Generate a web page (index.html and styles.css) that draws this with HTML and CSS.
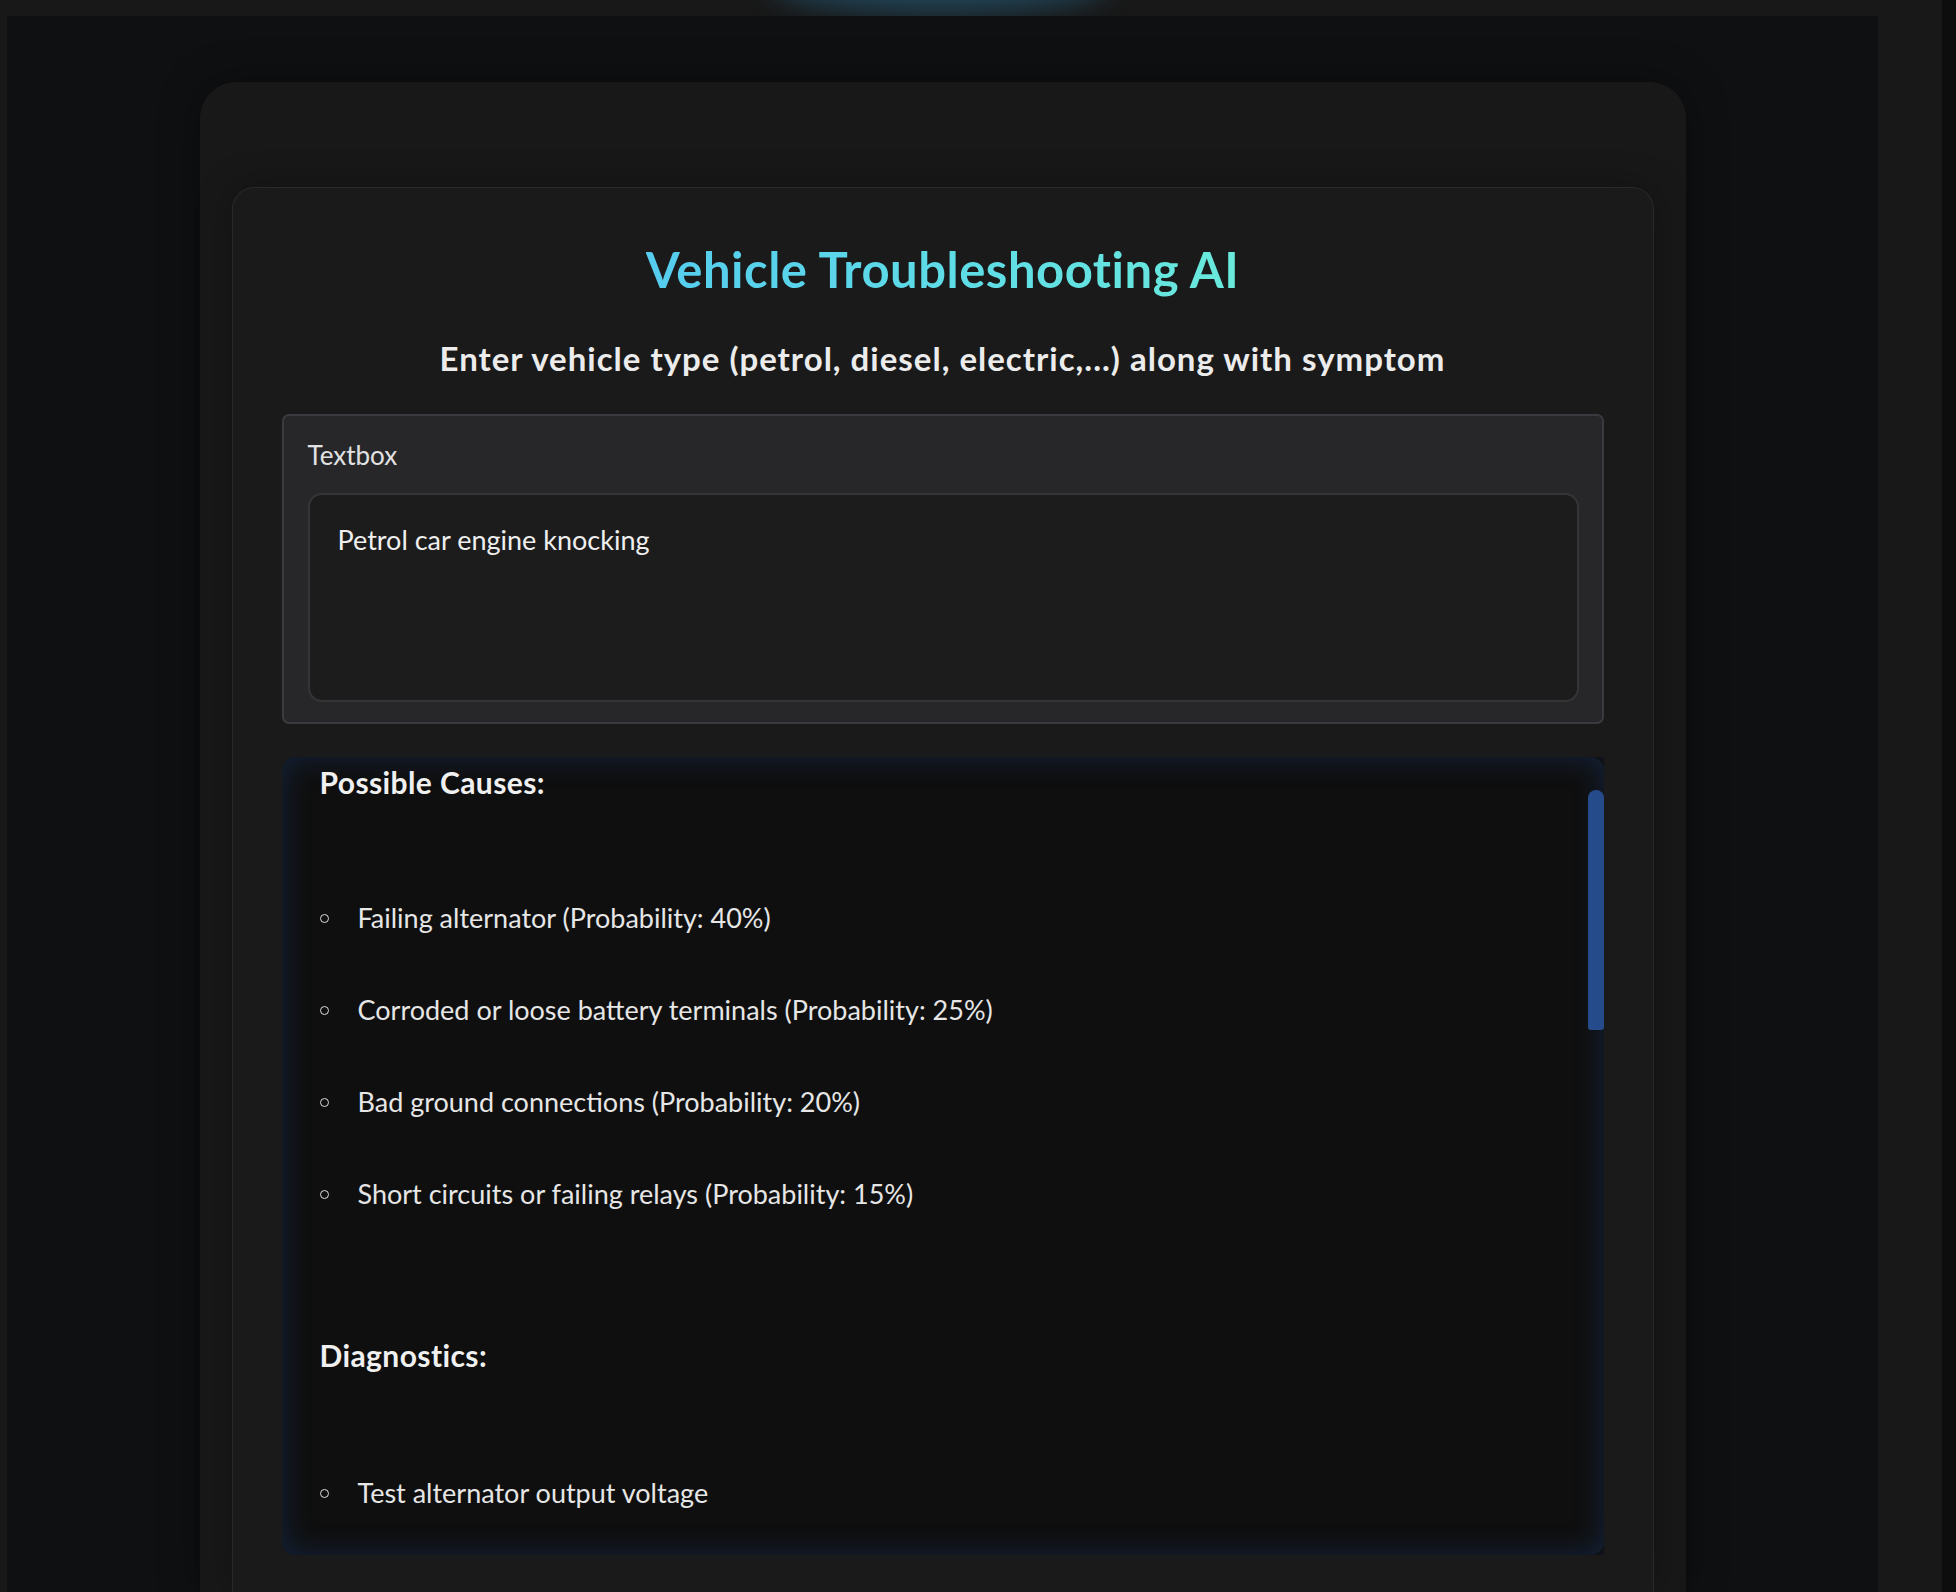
FILE: index.html
```html
<!DOCTYPE html>
<html lang="en">
<head>
<meta charset="utf-8">
<title>Vehicle Troubleshooting AI</title>
<link rel="stylesheet" href="styles.css">
</head>
<body>
  <div class="top-glow"></div>
  <div class="panel">
    <div class="outer-card">
      <div class="inner-card">
        <div class="title-row">
          <h1 class="title">Vehicle Troubleshooting AI</h1>
        </div>
        <h2 class="subtitle">Enter vehicle type (petrol, diesel, electric,...) along with symptom</h2>
        <div class="textbox-block">
          <div class="textbox-label">Textbox</div>
          <div class="textarea">Petrol car engine knocking</div>
        </div>
        <div class="output-wrap">
          <div class="output">
            <p class="out-heading">Possible Causes:</p>
            <ul class="out-list">
              <li>Failing alternator (Probability: 40%)</li>
              <li>Corroded or loose battery terminals (Probability: 25%)</li>
              <li>Bad ground connections (Probability: 20%)</li>
              <li>Short circuits or failing relays (Probability: 15%)</li>
            </ul>
            <p class="out-heading diag">Diagnostics:</p>
            <ul class="out-list diag-list">
              <li>Test alternator output voltage</li>
            </ul>
          </div>
          <div class="scroll-thumb"></div>
        </div>
      </div>
    </div>
  </div>
  <div class="page-scrollbar"></div>
</body>
</html>
```

FILE: styles.css
```css
html, body {
  margin: 0;
  padding: 0;
}

body {
  width: 1956px;
  height: 1592px;
  overflow: hidden;
  background: #181818;
  display: flex;
  position: relative;
  font-family: "Lato", "Noto Sans", sans-serif;
  color: #e8e8e8;
}

.top-glow {
  position: absolute;
  top: -50px;
  left: 770px;
  width: 340px;
  height: 64px;
  border-radius: 50%;
  background: rgba(45, 120, 160, 0.45);
  filter: blur(14px);
  z-index: 0;
}

.panel {
  position: relative;
  z-index: 1;
  margin: 16px 0 0 7px;
  width: 1871px;
  height: 1576px;
  background: #0f1012;
  display: flex;
  flex-direction: column;
  align-items: center;
  padding-top: 66px;
  box-sizing: border-box;
}

.page-scrollbar {
  margin-left: auto;
  width: 14px;
  height: 1592px;
  background: #0d0d0e;
}

.outer-card {
  width: 1486px;
  flex: 1;
  box-sizing: border-box;
  background: #181818;
  border-radius: 36px 36px 0 0;
  padding: 105px 32px 0 32px;
  box-shadow: 0 0 40px rgba(0, 0, 0, 0.35);
}

.inner-card {
  height: 100%;
  box-sizing: border-box;
  background: #1a1a1a;
  border: 1px solid #2a2a2b;
  border-bottom: none;
  border-radius: 22px 22px 0 0;
  padding: 53px 49px 0 49px;
  box-shadow: 0 0 36px rgba(0, 0, 0, 0.28);
}

.title-row {
  display: flex;
  justify-content: center;
}

.title {
  margin: 0;
  font-size: 49px;
  line-height: 56px;
  letter-spacing: 0.5px;
  font-weight: 700;
  background: linear-gradient(90deg, #55ccee 0%, #5fdde6 55%, #6ae9dc 100%);
  -webkit-background-clip: text;
  background-clip: text;
  color: transparent;
}

.subtitle {
  margin: 43px 0 0 0;
  text-align: center;
  font-size: 33px;
  line-height: 37px;
  letter-spacing: 1px;
  font-weight: 700;
  color: #ececec;
}

.textbox-block {
  margin-top: 37px;
  background: #27272a;
  border: 2px solid #3b3b3f;
  border-radius: 7px;
  padding: 24px 23px 20px 24px;
}

.textbox-label {
  font-size: 26px;
  line-height: 31px;
  color: #e2e2e2;
}

.textarea {
  margin-top: 22px;
  height: 209px;
  box-sizing: border-box;
  background: #1c1c1c;
  border: 2px solid #353537;
  border-radius: 14px;
  padding: 29px 28px;
  font-size: 27px;
  line-height: 31px;
  color: #efefef;
}

.output-wrap {
  position: relative;
  margin-top: 33px;
  height: 798px;
  background: #0f1219;
  border-radius: 14px 0 0 14px;
}

.output {
  height: 100%;
  box-sizing: border-box;
  overflow: hidden;
  background: #0f0f0f;
  border-radius: 14px;
  box-shadow: inset 0 0 30px rgba(35, 80, 160, 0.32);
  padding: 8px 60px 0 38px;
}

.out-heading {
  margin: 0;
  font-size: 30px;
  line-height: 34px;
  letter-spacing: 0.4px;
  font-weight: 700;
  color: #f0f0f0;
}

.out-heading.diag {
  margin-top: 129px;
}

.out-list {
  list-style: none;
  margin: 103px 0 0 0;
  padding: 0;
}

.out-list.diag-list {
  margin-top: 105px;
}

.out-list li {
  position: relative;
  padding-left: 38px;
  font-size: 27px;
  line-height: 31px;
  color: #e6e6e6;
  margin-bottom: 61px;
}

.out-list li:last-child {
  margin-bottom: 0;
}

.out-list li::before {
  content: "";
  position: absolute;
  left: 0;
  top: 12px;
  width: 7px;
  height: 7px;
  border: 1.5px solid #dddddd;
  border-radius: 50%;
}

.scroll-thumb {
  position: absolute;
  right: 0;
  top: 33px;
  width: 16px;
  height: 240px;
  background: #264b8b;
  border-radius: 8px 8px 3px 3px;
}
```
